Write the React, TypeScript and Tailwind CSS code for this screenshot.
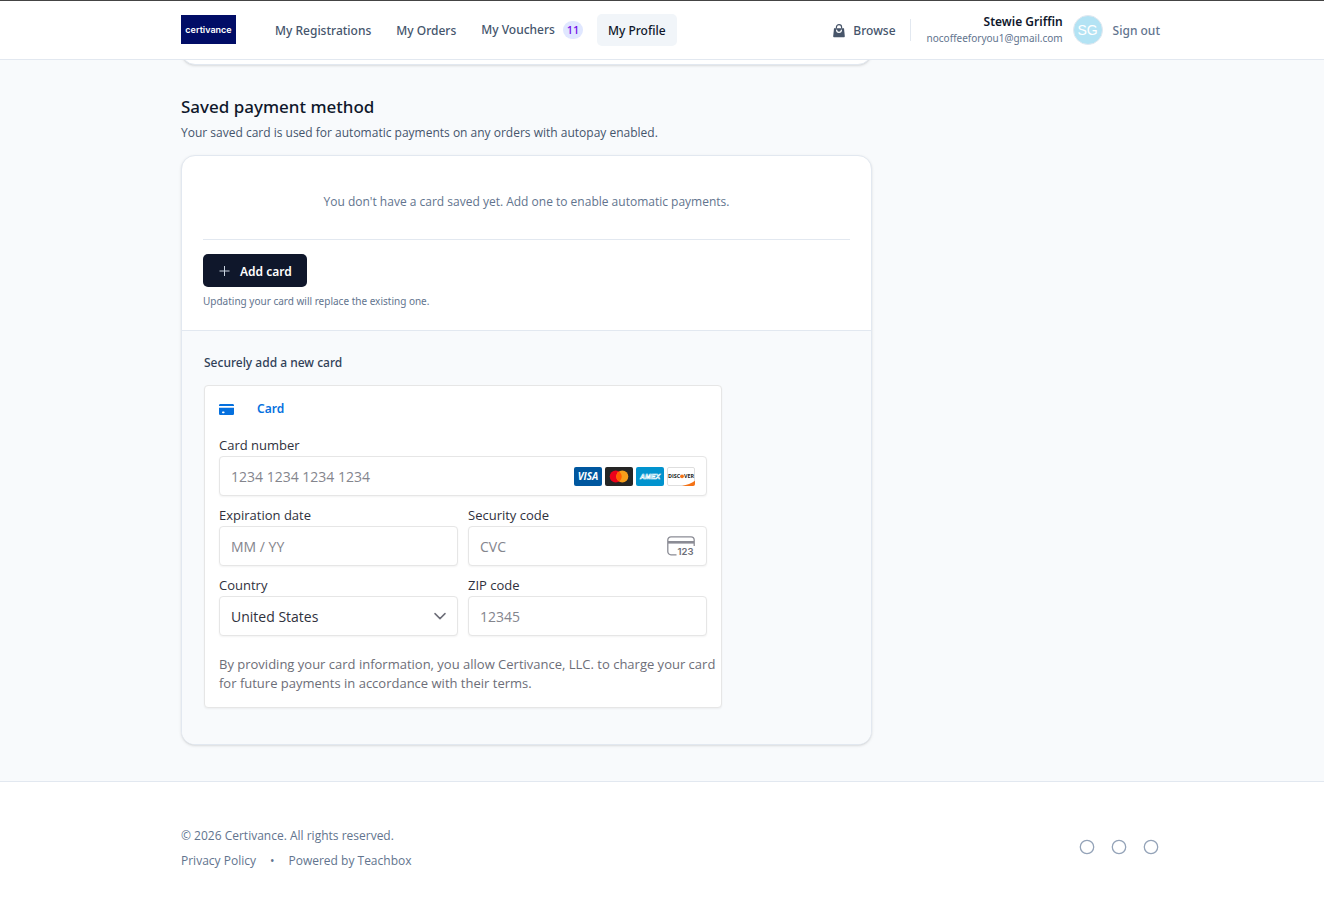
import type { ReactNode } from "react";

function Field({ id, label, children }: { id: string; label: string; children: ReactNode }) {
  return (
    <div className="min-w-0">
      <label htmlFor={id} className="block h-5 text-[13px] leading-[18px] text-[#30313d]">
        {label}
      </label>
      {children}
    </div>
  );
}

const boxClass =
  "flex h-10 items-center rounded-[4px] border border-[#e6e6e6] bg-white px-[11px] shadow-[0_1px_2px_rgba(0,0,0,0.05)]";
const inputClass =
  "w-full min-w-0 flex-1 bg-transparent pt-[2px] text-sm text-[#30313d] outline-none placeholder:text-[#84858d]";

function BagIcon() {
  return (
    <svg className="h-[14px] w-3" viewBox="0 0 12 14" aria-hidden="true">
      <path d="M3.4 4.500V3.300a2.600 2.600 0 0 1 5.200 0V4.500" fill="none" stroke="#475569" strokeWidth="1.200" />
      <path d="M1 4.200h10l.8 8c0 .7-.5 1.100-1.100 1.100H1.300c-.7 0-1.100-.5-1.100-1.100Z" fill="#475569" />
      <path d="M3.600 6a2.400 2.400 0 0 0 4.800 0" fill="none" stroke="#fff" strokeWidth="1.200" strokeLinecap="round" />
    </svg>
  );
}

function CardIcon() {
  return (
    <svg className="h-[11px] w-[15px]" viewBox="0 0 15 11" aria-hidden="true">
      <path d="M0 2V1.400C0 .6.6 0 1.400 0h12.200c.8 0 1.400.6 1.400 1.400V2Z" fill="#0570de" />
      <path d="M0 3.700h15v5.700c0 .9-.7 1.600-1.600 1.600H1.600C.7 11 0 10.300 0 9.400Z" fill="#0570de" />
      <rect x="3" y="7.600" width="2.600" height="1.600" rx=".8" fill="#fff" />
    </svg>
  );
}

function Brands() {
  return (
    <div className="flex shrink-0 gap-[3px]">
      <svg className="h-[19px] w-7" viewBox="0 0 28 19" role="img" aria-label="Visa">
        <rect width="28" height="19" rx="2" fill="#00579f" />
        <text x="14" y="13.200" textAnchor="middle" fontFamily="Open Sans, sans-serif" fontSize="10" fontWeight="700" fontStyle="italic" fill="#fff">VISA</text>
      </svg>
      <svg className="h-[19px] w-7" viewBox="0 0 28 19" role="img" aria-label="Mastercard">
        <rect width="28" height="19" rx="2" fill="#252525" />
        <circle cx="10.700" cy="9.500" r="6" fill="#eb001b" />
        <circle cx="17.300" cy="9.500" r="6" fill="#f79e1b" />
        <path d="M14 4.500a6 6 0 0 1 0 10a6 6 0 0 1 0-10Z" fill="#ff5f00" />
      </svg>
      <svg className="h-[19px] w-7" viewBox="0 0 28 19" role="img" aria-label="American Express">
        <rect width="28" height="19" rx="2" fill="#0193ce" />
        <text x="14" y="12" textAnchor="middle" fontFamily="Liberation Sans, sans-serif" fontSize="7" fontWeight="700" fontStyle="italic" fill="#0193ce" stroke="#fff" strokeWidth=".6">AMEX</text>
      </svg>
      <svg className="h-[19px] w-7" viewBox="0 0 28 19" role="img" aria-label="Discover">
        <rect x=".5" y=".5" width="27" height="18" rx="1.500" fill="#fff" stroke="#dedede" />
        <path d="M15 19c5-1 9.500-2.800 13-5.200V17a2 2 0 0 1-2 2Z" fill="#f47216" />
        <text x="1" y="11.200" fontFamily="Open Sans, sans-serif" fontSize="5.400" fontWeight="700" fill="#201d1c">DISC</text>
        <circle cx="15" cy="9.300" r="1.900" fill="#f47216" />
        <text x="16.900" y="11.200" fontFamily="Open Sans, sans-serif" fontSize="5.400" fontWeight="700" fill="#201d1c">VER</text>
      </svg>
    </div>
  );
}

function CvcIcon() {
  return (
    <svg className="h-6 w-7 shrink-0" viewBox="0 -2 28 24" aria-hidden="true">
      <path d="M9.500 18.800H4A3.200 3.200 0 0 1 .8 15.600V4A3.200 3.200 0 0 1 4 .8h20A3.200 3.200 0 0 1 27.200 4v6" fill="none" stroke="#8b8c95" strokeWidth="1.300" />
      <rect x="1" y="5" width="26" height="2.600" fill="#8b8c95" />
      <text x="10.500" y="19.300" fontFamily="Inter, sans-serif" fontSize="9.500" fontWeight="600" fill="#6d6e78">123</text>
    </svg>
  );
}

const shell = "mx-auto w-full max-w-[998px] pl-[18px]";

export default function App() {
  return (
    <div className="flex min-h-screen flex-col bg-slate-50 font-['Open_Sans',sans-serif] text-xs text-slate-600">
      <header className="border-t border-b border-t-[#444] border-b-slate-200 bg-white font-['Noto_Sans',sans-serif]">
        <div className={`${shell} flex h-[58px] items-center pr-[1px]`}>
          <a href="#home" className="mb-[1px] flex h-[29px] w-[55px] items-center justify-center bg-[#010d66] font-['Inter',sans-serif] text-[9px] font-semibold text-white">
            certivance
          </a>
          <nav className="ml-7 flex items-center gap-[3px] font-medium">
            <a href="#registrations" className="px-[11px] pt-[9px] pb-[7px] leading-4">My Registrations</a>
            <a href="#orders" className="px-[11px] pt-[9px] pb-[7px] leading-4">My Orders</a>
            <a href="#vouchers" className="flex items-center gap-2 px-[11px] py-2 leading-4">
              My Vouchers
              <span className="flex h-[18px] w-5 items-center justify-center rounded-full bg-indigo-100 text-[11px] text-violet-700">11</span>
            </a>
            <a href="#profile" aria-current="page" className="rounded-[5px] bg-slate-100 px-[11px] pt-[9px] pb-[7px] leading-4 text-slate-900">My Profile</a>
          </nav>
          <div className="ml-auto flex items-center">
            <a href="#browse" className="flex items-center gap-2 pt-[2px] pr-[14px] font-medium">
              <BagIcon />
              Browse
            </a>
            <div className="flex h-[22px] items-center border-l border-slate-200 pl-4">
              <div className="pb-[2px] text-right">
                <p className="text-xs font-semibold leading-[17px] text-slate-900">Stewie Griffin</p>
                <p className="text-[10px] leading-4 text-slate-500">nocoffeeforyou1@gmail.com</p>
              </div>
            </div>
            <span className="mr-[10px] ml-[10px] flex size-[30px] items-center justify-center rounded-full border border-slate-200 bg-[#b3e3f4] font-['Liberation_Sans',sans-serif] text-sm text-white">SG</span>
            <button type="button" className="pt-[2px] font-medium text-slate-500">Sign out</button>
          </div>
        </div>
      </header>

      <main className={`${shell} pb-9`}>
        <div className="max-w-[691px]">
          <div className="flex h-2 items-end overflow-hidden pb-[3px]">
            <div className="h-10 w-full shrink-0 rounded-[14px] border border-slate-200 bg-white shadow-sm" />
          </div>

          <h2 className="mt-[27px] font-['Noto_Sans',sans-serif] text-[17px] font-medium leading-6 text-slate-900">Saved payment method</h2>
          <p className="mt-1 leading-5">Your saved card is used for automatic payments on any orders with autopay enabled.</p>

          <section className="mt-3 overflow-hidden rounded-[14px] border border-slate-200 bg-white shadow-sm">
            <div className="px-[21px] pb-[19px]">
              <p className="border-b border-slate-200 pt-9 pb-[27px] text-center leading-5 text-slate-500">
                You don't have a card saved yet. Add one to enable automatic payments.
              </p>
              <button type="button" className="mt-[14px] flex h-[33px] items-center gap-[10px] rounded-[5px] bg-slate-900 px-[15px] pt-[2px] font-['Noto_Sans',sans-serif] font-semibold text-white">
                <svg className="size-3" viewBox="0 0 12 12" aria-hidden="true">
                  <path d="M6.500 0v10M1.500 5h10" stroke="#cbd5e1" strokeWidth="1" />
                </svg>
                Add card
              </button>
              <p className="mt-1 font-['Noto_Sans',sans-serif] text-[10px] leading-5 text-slate-500">Updating your card will replace the existing one.</p>
            </div>

            <div className="border-t border-slate-200 bg-slate-50 px-[22px] pt-[22px] pb-9">
              <h3 className="font-['Noto_Sans',sans-serif] font-medium leading-5 text-slate-700">Securely add a new card</h3>
              <form className="mt-3 max-w-[518px] rounded-[4px] border border-[#e6e6e6] bg-white px-[14px] pt-[13px] pb-[14px] shadow-[0_1px_2px_rgba(0,0,0,0.05)]">
                <div className="flex h-5 items-center gap-[23px] font-['Noto_Sans',sans-serif] font-semibold text-[#0570de]">
                  <CardIcon />
                  Card
                </div>
                <div className="mt-[17px] grid grid-cols-2 gap-[10px]">
                  <div className="col-span-2">
                    <Field id="number" label="Card number">
                      <div className={boxClass}>
                        <input id="number" className={inputClass} placeholder="1234 1234 1234 1234" />
                        <Brands />
                      </div>
                    </Field>
                  </div>
                  <Field id="expiry" label="Expiration date">
                    <div className={boxClass}>
                      <input id="expiry" className={inputClass} placeholder="MM / YY" />
                    </div>
                  </Field>
                  <Field id="cvc" label="Security code">
                    <div className={boxClass}>
                      <input id="cvc" className={inputClass} placeholder="CVC" />
                      <CvcIcon />
                    </div>
                  </Field>
                  <Field id="country" label="Country">
                    <div className={boxClass}>
                      <select id="country" className="w-full min-w-0 appearance-none bg-transparent pt-[2px] text-sm text-[#30313d] outline-none">
                        <option>United States</option>
                      </select>
                      <svg className="h-3 w-3 shrink-0" viewBox="0 0 12 12" aria-hidden="true">
                        <path d="m1 3.600 5 5 5-5" fill="none" stroke="#6d6e78" strokeWidth="1.500" strokeLinecap="round" strokeLinejoin="round" />
                      </svg>
                    </div>
                  </Field>
                  <Field id="zip" label="ZIP code">
                    <div className={boxClass}>
                      <input id="zip" className={inputClass} placeholder="12345" />
                    </div>
                  </Field>
                </div>
                <p className="-mr-3 mt-[19px] text-[13px] leading-[19px] text-[#6d6e78]">
                  By providing your card information, you allow Certivance, LLC. to charge your card for future payments in accordance with their terms.
                </p>
              </form>
            </div>
          </section>
        </div>
      </main>

      <footer className="flex-1 border-t border-slate-200 bg-white text-slate-500">
        <div className={`${shell} flex items-center justify-between pt-11 pb-9`}>
          <div className="leading-5">
            <p>© 2026 Certivance. All rights reserved.</p>
            <p className="mt-[5px] flex gap-[14px]">
              <a href="#privacy">Privacy Policy</a>
              <span>•</span>
              <a href="#teachbox">Powered by Teachbox</a>
            </p>
          </div>
          <div className="flex gap-4 pr-[2px] pb-1">
            {["Facebook", "LinkedIn", "Website"].map((name) => (
              <a key={name} href="#social" aria-label={name}>
                <svg className="size-4" viewBox="0 0 16 16" aria-hidden="true">
                  <circle cx="8" cy="8" r="6.700" fill="none" stroke="#94a3b8" strokeWidth="1.300" />
                </svg>
              </a>
            ))}
          </div>
        </div>
      </footer>
    </div>
  );
}
